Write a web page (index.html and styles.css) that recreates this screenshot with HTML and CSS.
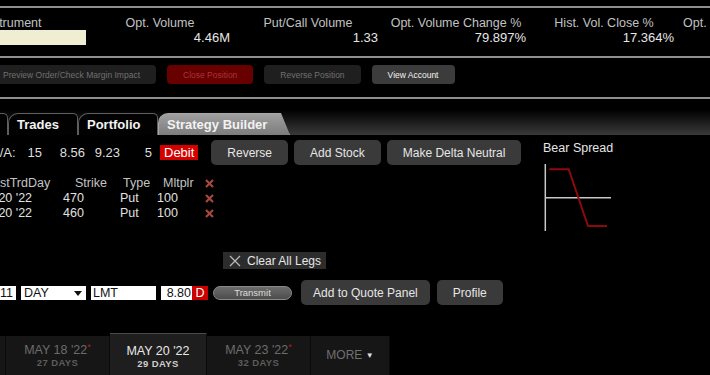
FILE: index.html
```html
<!DOCTYPE html>
<html lang="en">
<head>
    <meta charset="UTF-8">
    <meta name="viewport" content="width=device-width, initial-scale=1.0">
    <title>Strategy Builder</title>
    <link rel="stylesheet" href="styles.css">
</head>
<body>
    <!-- Quote statistics -->
    <div class="stats">
        <div class="stat">
            <div class="stat-label">Instrument</div>
            <div class="symbol-box"></div>
        </div>
        <div class="stat">
            <div class="stat-label">Opt. Volume</div>
            <div class="stat-value">4.46M</div>
        </div>
        <div class="stat">
            <div class="stat-label">Put/Call Volume</div>
            <div class="stat-value">1.33</div>
        </div>
        <div class="stat">
            <div class="stat-label">Opt. Volume Change %</div>
            <div class="stat-value">79.897%</div>
        </div>
        <div class="stat">
            <div class="stat-label">Hist. Vol. Close %</div>
            <div class="stat-value">17.364%</div>
        </div>
        <div class="stat last">
            <div class="stat-label">Opt. Open Interest</div>
            <div class="stat-value"></div>
        </div>
    </div>

    <!-- Account actions -->
    <div class="actions">
        <button class="act">Preview Order/Check Margin Impact</button>
        <button class="act danger">Close Position</button>
        <button class="act">Reverse Position</button>
        <button class="act light">View Account</button>
    </div>

    <!-- Tabs -->
    <div class="tabbar">
        <div class="tab cut">Quotes</div>
        <div class="tab trades">Trades</div>
        <div class="tab">Portfolio</div>
        <div class="tab active">Strategy Builder</div>
    </div>

    <!-- Strategy builder -->
    <div class="builder">
        <div class="legs-area">
            <div class="quote">
                <span class="pair-label">B/A:</span>
                <span class="q q1">15</span>
                <span class="q q2">8.56</span>
                <span class="q q3">9.23</span>
                <span class="q q4">5</span>
                <span class="debit">Debit</span>
                <button class="tool first-tool">Reverse</button>
                <button class="tool">Add Stock</button>
                <button class="tool">Make Delta Neutral</button>
            </div>

            <div class="legs">
                <div class="lh date">LastTrdDay</div>
                <div class="lh strike">Strike</div>
                <div class="lh type">Type</div>
                <div class="lh mult">Mltplr</div>
                <div class="del"><svg width="9" height="9" viewBox="0 0 9 9"><path d="M1 1L8 8M8 1L1 8"/></svg></div>

                <div class="lv">MAY 20 '22</div>
                <div class="lv">470</div>
                <div class="lv">Put</div>
                <div class="lv">100</div>
                <div class="del"><svg width="9" height="9" viewBox="0 0 9 9"><path d="M1 1L8 8M8 1L1 8"/></svg></div>

                <div class="lv">MAY 20 '22</div>
                <div class="lv">460</div>
                <div class="lv">Put</div>
                <div class="lv">100</div>
                <div class="del"><svg width="9" height="9" viewBox="0 0 9 9"><path d="M1 1L8 8M8 1L1 8"/></svg></div>
            </div>

            <button class="clear">
                <svg width="12" height="12" viewBox="0 0 12 12"><path d="M1 1L11 11M11 1L1 11"/></svg>
                Clear All Legs
            </button>

            <div class="order">
                <div class="field qty">11</div>
                <div class="field tif">DAY<span class="caret"></span></div>
                <div class="field otype">LMT</div>
                <div class="field price">8.80</div>
                <div class="side">D</div>
                <button class="transmit">Transmit</button>
                <button class="tool quote-btn">Add to Quote Panel</button>
                <button class="tool profile-btn">Profile</button>
            </div>
        </div>

        <div class="payoff">
            <div class="payoff-title">Bear Spread</div>
            <svg class="payoff-chart" width="72" height="72" viewBox="0 0 72 72">
                <line x1="2.3" y1="2" x2="2.3" y2="69" stroke="#c8c8c8" stroke-width="1.5"/>
                <line x1="2.3" y1="35.7" x2="68" y2="35.7" stroke="#c8c8c8" stroke-width="1.5"/>
                <polyline points="6.3,7.3 25.7,7.3 45,64 64,64" fill="none" stroke="#8e0a0a" stroke-width="2"/>
            </svg>
        </div>
    </div>

    <!-- Expiries -->
    <div class="expiries">
        <div class="exp cut"><div class="exp-date">MAY 16 '22</div><div class="exp-days">25 DAYS</div></div>
        <div class="exp wide"><div class="exp-date">MAY 18 '22<sup>*</sup></div><div class="exp-days">27 DAYS</div></div>
        <div class="exp on"><div class="exp-date">MAY 20 '22</div><div class="exp-days">29 DAYS</div></div>
        <div class="exp wide"><div class="exp-date">MAY 23 '22<sup>*</sup></div><div class="exp-days">32 DAYS</div></div>
        <div class="exp more">MORE <span class="more-caret">&#9660;</span></div>
    </div>
</body>
</html>
```

FILE: styles.css
```css
* {
    box-sizing: border-box;
    margin: 0;
    padding: 0;
}
body {
    width: 710px;
    height: 375px;
    overflow: hidden;
    background: #000;
    color: #d8d8d8;
    font-family: "Liberation Sans", Arial, sans-serif;
    font-size: 12.5px;
}
button {
    font-family: inherit;
    border: none;
    cursor: pointer;
    white-space: nowrap;
}

/* stats */
.stats {
    display: flex;
    width: 772px;
    margin: 6px 0 0 -62px;
    padding: 8px 0 11px;
    border-top: 2px solid #8f8f8f;
    border-bottom: 2px solid #8f8f8f;
}
.stat {
    flex: 0 0 148px;
}
.stat-label {
    line-height: 14px;
    text-align: center;
    white-space: nowrap;
    color: #c2c2c2;
}
.stat.last .stat-label {
    text-align: left;
    padding-left: 5px;
}
.stat-value {
    height: 15px;
    line-height: 15px;
    padding-right: 4px;
    text-align: right;
    font-size: 13px;
    color: #e6e6e6;
}
.symbol-box {
    height: 15px;
    background: #efeed3;
}

/* actions */
.actions {
    display: flex;
    gap: 11px;
    margin-left: -13px;
    padding: 7px 0 13px;
    border-bottom: 2px solid #8f8f8f;
}
.act {
    height: 19px;
    padding: 0 16px;
    border-radius: 4px;
    background: #1f1f1f;
    color: #707070;
    font-size: 8.5px;
}
.act.danger {
    background: #680000;
    color: #a83434;
}
.act.light {
    background: #3c3c3c;
    color: #f2f2f2;
}

/* tabs */
.tabbar {
    display: flex;
    align-items: flex-end;
    height: 36px;
    background: linear-gradient(#000 30%, #3a3a3a);
}
.tab {
    width: 80px;
    height: 22px;
    padding: 3px 0 0 8px;
    line-height: 15px;
    font-size: 13px;
    font-weight: bold;
    white-space: nowrap;
    overflow: hidden;
    color: #f2f2f2;
    background: #020202;
    border: 1px solid #5e5e5e;
    border-bottom: none;
    border-radius: 10px 5px 0 0;
}
.tab.cut {
    width: 72px;
    margin-left: -64px;
}
.tab.trades {
    width: 70px;
}
.tab.active {
    width: 132px;
    background: linear-gradient(#a0a0a0, #7c7c7c);
    border-color: #a8a8a8;
    clip-path: polygon(0 0, calc(100% - 9px) 0, 100% 100%, 0 100%);
}

/* builder */
.builder {
    display: flex;
    padding-top: 5px;
}
.legs-area {
    width: 543px;
}
.quote {
    display: flex;
    align-items: center;
    height: 25px;
    font-size: 13px;
    color: #dedede;
}
.pair-label {
    width: 24px;
    margin-left: -9px;
    white-space: nowrap;
}
.q {
    text-align: right;
}
.q1 { width: 27px; }
.q2 { width: 43px; }
.q3 { width: 35px; }
.q4 { width: 32px; }
.debit {
    margin-left: 8px;
    padding: 0 4px;
    line-height: 15px;
    background: #d40000;
    color: #fff;
}
.tool {
    height: 25px;
    padding: 0 16px;
    margin-left: 6px;
    border-radius: 5px;
    background: #3a3a3a;
    color: #e6e6e6;
    font-size: 12px;
}
.first-tool {
    margin-left: 13px;
}

/* legs */
.legs {
    display: grid;
    grid-template-columns: 94px 57px 37px 48px 14px;
    width: 250px;
    margin: 11px 0 0 -31px;
    line-height: 15px;
}
.lh {
    color: #c4c4c4;
    white-space: nowrap;
}
.lh.date { padding-left: 17px; }
.lh.strike { padding-left: 12px; }
.lh.type { padding-left: 3px; }
.lh.mult { padding-left: 6px; }
.lv {
    color: #e0e0e0;
    white-space: nowrap;
}
.del {
    display: flex;
    align-items: center;
}
.del path {
    stroke: #a8473d;
    stroke-width: 2.2;
}

.clear {
    display: flex;
    align-items: center;
    gap: 6px;
    height: 17px;
    margin: 31px 0 0 223px;
    padding: 0 5px 0 6px;
    background: #2c2c2c;
    color: #e6e6e6;
    font-size: 12px;
}
.clear path {
    stroke: #b8b8b8;
    stroke-width: 1.3;
}

/* order line */
.order {
    display: flex;
    align-items: center;
    height: 25px;
    margin-top: 11px;
}
.field {
    position: relative;
    height: 14px;
    line-height: 14px;
    padding: 0 3px;
    background: #fff;
    color: #111;
    white-space: nowrap;
}
.qty {
    width: 40px;
    margin-left: -24px;
    text-align: right;
}
.tif {
    width: 65px;
    margin-left: 5px;
}
.caret {
    position: absolute;
    right: 4px;
    top: 5px;
    border-left: 4px solid transparent;
    border-right: 4px solid transparent;
    border-top: 5px solid #111;
}
.otype {
    width: 65px;
    margin-left: 5px;
    padding-left: 2px;
}
.price {
    width: 31px;
    margin-left: 5px;
    padding: 0 1px 0 0;
    text-align: right;
}
.side {
    width: 16px;
    height: 14px;
    line-height: 14px;
    text-align: center;
    background: #cc0000;
    color: #fff;
}
.transmit {
    width: 79px;
    height: 14px;
    margin-left: 5px;
    border: 1px solid #8a8a8a;
    border-radius: 7px;
    background: linear-gradient(#6c6c6c, #4c4c4c);
    color: #dcdcdc;
    font-size: 9.5px;
}
.quote-btn {
    margin-left: 9px;
    padding: 0 12px;
}
.profile-btn {
    margin-left: 7px;
}

/* payoff */
.payoff {
    padding-top: 1px;
}
.payoff-title {
    line-height: 15px;
    color: #e6e6e6;
}
.payoff-chart {
    display: block;
    margin-top: 6px;
}

/* expiries */
.expiries {
    display: flex;
    align-items: flex-end;
    height: 42px;
    margin-top: 28px;
}
.exp {
    flex: 0 0 104px;
    height: 39px;
    padding-top: 7px;
    text-align: center;
    background: #161616;
    border-right: 1px solid #0a0a0a;
    white-space: nowrap;
}
.exp.cut {
    margin-left: -98px;
}
.exp.on {
    flex-basis: 97px;
    height: 42px;
    padding-top: 10px;
    background: #1e1e1e;
    border-top: 1px solid #4a4a4a;
}
.exp-date {
    line-height: 14px;
    font-size: 12.5px;
    color: #6c6c6c;
}
.exp-date sup {
    font-size: 9px;
    color: #b02020;
    vertical-align: 4px;
    line-height: 0;
}
.exp-days {
    line-height: 12px;
    font-size: 9.5px;
    font-weight: bold;
    letter-spacing: 0.4px;
    color: #5c5c5c;
}
.exp.on .exp-date {
    color: #e8e8e8;
}
.exp.on .exp-days {
    color: #cfcfcf;
}
.exp.more {
    flex-basis: 79px;
    padding-top: 12px;
    line-height: 14px;
    font-size: 12px;
    color: #707070;
}
.more-caret {
    font-size: 8px;
    color: #dedede;
    vertical-align: 1px;
}
```
